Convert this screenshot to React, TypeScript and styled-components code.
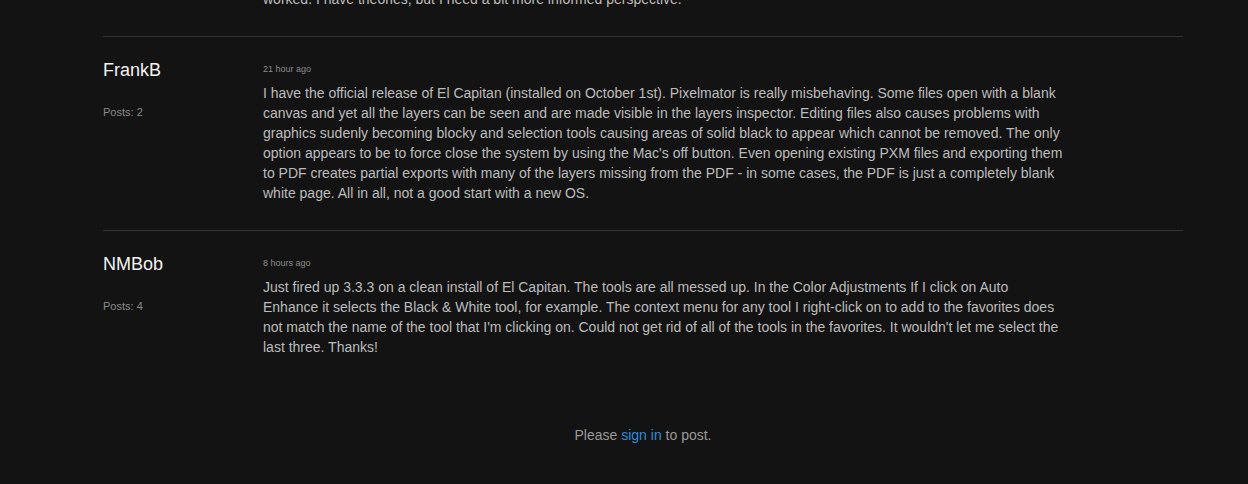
import React from "react";
import styled, { createGlobalStyle } from "styled-components";

const GlobalStyle = createGlobalStyle`
  html, body {
    margin: 0;
    padding: 0;
    background: #131313;
    overflow: hidden;
  }
  body {
    font-family: "Liberation Sans", Arial, Helvetica, sans-serif;
  }
`;

interface Post {
  author: string;
  posts: number;
  time: string;
  body: string;
}

const posts: Post[] = [
  {
    author: "Alexandr",
    posts: 3,
    time: "1 day ago",
    body:
      "Has anyone else had trouble with Pixelmator after upgrading to El Capitan? I'd like to understand why my usual workflow no longer works the way it did before, and what exactly changed in the system. I've tried reinstalling and resetting, but nothing has worked. I have theories, but I need a bit more informed perspective.",
  },
  {
    author: "FrankB",
    posts: 2,
    time: "21 hour ago",
    body:
      "I have the official release of El Capitan (installed on October 1st). Pixelmator is really misbehaving. Some files open with a blank canvas and yet all the layers can be seen and are made visible in the layers inspector. Editing files also causes problems with graphics sudenly becoming blocky and selection tools causing areas of solid black to appear which cannot be removed. The only option appears to be to force close the system by using the Mac's off button. Even opening existing PXM files and exporting them to PDF creates partial exports with many of the layers missing from the PDF - in some cases, the PDF is just a completely blank white page. All in all, not a good start with a new OS.",
  },
  {
    author: "NMBob",
    posts: 4,
    time: "8 hours ago",
    body:
      "Just fired up 3.3.3 on a clean install of El Capitan. The tools are all messed up. In the Color Adjustments If I click on Auto Enhance it selects the Black & White tool, for example. The context menu for any tool I right-click on to add to the favorites does not match the name of the tool that I'm clicking on. Could not get rid of all of the tools in the favorites. It wouldn't let me select the last three. Thanks!",
  },
];

const Thread = styled.div`
  width: 1080px;
  margin: -97px 0 0 103px;
`;

const PostRow = styled.div<{ $divider: boolean }>`
  display: grid;
  grid-template-columns: 160px 1fr;
  padding: 23px 0 27px;
  border-bottom: ${({ $divider }) => ($divider ? "1px solid #333" : "none")};
`;

const Author = styled.div`
  display: flex;
  flex-direction: column;
`;

const Name = styled.div`
  font-size: 18px;
  line-height: 20px;
  color: #f2f2f2;
`;

const Count = styled.div`
  margin-top: 25px;
  font-size: 11px;
  line-height: 14px;
  color: #8a8a8a;
`;

const Content = styled.div`
  display: flex;
  flex-direction: column;
`;

const Time = styled.div`
  font-size: 9px;
  line-height: 18px;
  color: #8a8a8a;
`;

const Body = styled.p`
  margin: 5px 0 0;
  max-width: 801px;
  font-size: 14px;
  line-height: 20px;
  color: #bcbcbc;
`;

const SignIn = styled.div`
  margin-top: 41px;
  text-align: center;
  font-size: 14px;
  line-height: 20px;
  color: #9a9a9a;

  a {
    color: #2f8ddc;
    text-decoration: none;
  }
`;

export default function App() {
  return (
    <>
      <GlobalStyle />
      <Thread>
        {posts.map((p, i) => (
          <PostRow key={p.author} $divider={i < posts.length - 1}>
            <Author>
              <Name>{p.author}</Name>
              <Count>Posts: {p.posts}</Count>
            </Author>
            <Content>
              <Time>{p.time}</Time>
              <Body>{p.body}</Body>
            </Content>
          </PostRow>
        ))}
        <SignIn>
          Please <a href="#">sign in</a> to post.
        </SignIn>
      </Thread>
    </>
  );
}
